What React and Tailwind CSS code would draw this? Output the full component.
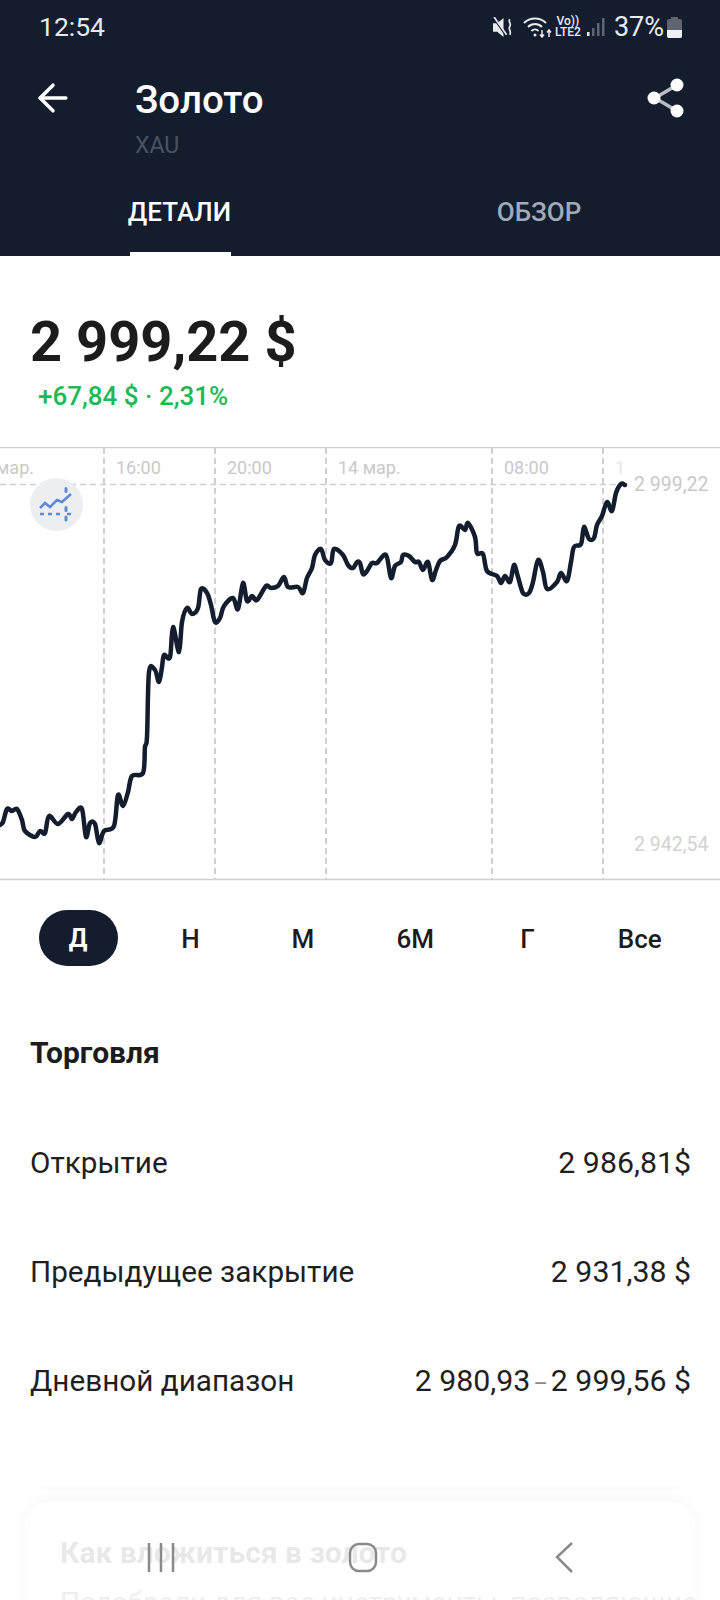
import { ArrowLeft } from 'lucide-react'

const font = "font-['Roboto','Liberation_Sans',sans-serif]"

const points = [
  [0, 825], [3, 822], [7, 809], [12, 811], [17, 809], [22, 820], [25, 831], [35, 837], [40, 831], [45, 833],
  [49, 816], [58, 824], [68, 814], [72, 819], [76, 812], [82, 809], [86, 837], [90, 823], [95, 824], [99, 843],
  [104, 831], [114, 826], [118, 795], [123, 806], [128, 792], [132, 776], [143, 773], [145, 747], [147, 737],
  [149, 672], [155, 670], [159, 682], [162, 667], [164, 655], [170, 657], [173, 627], [179, 652], [182, 622],
  [187, 608], [192, 614], [198, 608], [201, 589], [207, 593], [211, 605], [215, 622], [220, 618], [224, 606],
  [233, 598], [238, 609], [243, 583], [247, 601], [252, 596], [257, 600], [266, 586], [271, 588], [278, 586],
  [284, 577], [288, 587], [298, 587], [303, 593], [307, 578], [312, 568], [315, 555], [321, 549], [325, 560],
  [331, 563], [334, 549], [343, 555], [348, 565], [353, 568], [357, 562], [360, 563], [363, 574], [367, 571],
  [372, 563], [377, 563], [386, 555], [391, 578], [395, 566], [401, 562], [403, 555], [409, 556], [415, 562],
  [419, 562], [423, 570], [428, 562], [432, 580], [436, 570], [440, 561], [447, 557], [455, 545], [459, 526],
  [465, 530], [468, 523], [475, 537], [477, 553], [483, 554], [487, 571], [497, 576], [501, 583], [505, 576],
  [510, 582], [514, 565], [518, 577], [523, 593], [529, 593], [533, 582], [538, 560], [543, 572], [547, 589],
  [557, 582], [561, 573], [567, 581], [571, 562], [574, 547], [581, 544], [584, 527], [589, 539], [594, 538],
  [597, 525], [602, 516], [607, 502], [612, 511], [616, 493], [621, 484], [625, 485],
]

// сглаживание линии графика (Catmull-Rom -> bezier)
function smoothPath(pts) {
  let d = `M${pts[0][0]} ${pts[0][1]}`
  for (let i = 0; i < pts.length - 1; i++) {
    const p0 = pts[i - 1] || pts[i]
    const p1 = pts[i]
    const p2 = pts[i + 1]
    const p3 = pts[i + 2] || p2
    const c1x = p1[0] + (p2[0] - p0[0]) / 6
    const c1y = p1[1] + (p2[1] - p0[1]) / 6
    const c2x = p2[0] - (p3[0] - p1[0]) / 6
    const c2y = p2[1] - (p3[1] - p1[1]) / 6
    d += `C${c1x.toFixed(1)} ${c1y.toFixed(1)} ${c2x.toFixed(1)} ${c2y.toFixed(1)} ${p2[0]} ${p2[1]}`
  }
  return d
}

const gridX = [104, 215, 326, 492, 603]

const timeLabels = [
  { x: 34, text: '13 мар.', anchor: 'end' },
  { x: 116, text: '16:00' },
  { x: 227, text: '20:00' },
  { x: 338, text: '14 мар.' },
  { x: 504, text: '08:00' },
  { x: 615, text: '1', faded: true },
]

const ranges = ['Д', 'Н', 'М', '6М', 'Г', 'Все']

const rows = [
  ['Открытие', '2 986,81$'],
  ['Предыдущее закрытие', '2 931,38 $'],
  [
    'Дневной диапазон',
    <>
      2 980,93<span className="mx-[3px] text-[22px] text-[#8a8a8a]">–</span>2 999,56 $
    </>,
  ],
]

function StatusIcons() {
  return (
    <div className="flex items-center">
      <svg width="21" height="21" viewBox="0 0 20 20" className="mr-[9px]">
        <path d="M0 6h4l6-5v18l-6-5H0z" fill="#e8eaee" />
        <path d="M1 1l11 16" stroke="#141d2d" strokeWidth="2" />
        <path d="M1 0l12 17" stroke="#e8eaee" strokeWidth="1.6" />
        <path d="M16 2c-2 3 2 4 0 7s2 4 0 8" stroke="#e8eaee" strokeWidth="1.6" fill="none" />
      </svg>
      <svg width="29" height="22" viewBox="0 0 29 22" fill="none" stroke="#e8eaee" strokeWidth="2" className="mr-[3px]">
        <path d="M1 7c6-6 16-6 22 0" />
        <path d="M5 11c4-4 10-4 14 0" />
        <path d="M8.500 15c2-2 5-2 7 0" />
        <circle cx="12" cy="19" r="1.500" fill="#e8eaee" stroke="none" />
        <path d="M19 14v7M17 18.500l2 2.500 2-2.500M26 21v-7M24 16.500l2-2.500 2 2.500" strokeWidth="1.500" />
      </svg>
      <div className="flex w-[26px] flex-col items-center text-[12px] leading-[11px] font-medium text-[#e8eaee]">
        <span>Vo))</span>
        <span>LTE2</span>
      </div>
      <svg width="18" height="20" viewBox="0 0 18 20" className="ml-[6px]">
        <rect x="0" y="15" width="2.500" height="4" fill="#e8eaee" />
        <rect x="5" y="11" width="2.500" height="8" fill="#5e6570" />
        <rect x="10" y="6" width="2.500" height="13" fill="#5e6570" />
        <rect x="15" y="1" width="2.500" height="18" fill="#5e6570" />
      </svg>
      <span className="ml-[9px] text-[27px] leading-none text-[#e8eaee]">37%</span>
      <svg width="15" height="21" viewBox="0 0 15 21" className="ml-[3px]">
        <path d="M4 0h7v2h2q2 0 2 2v15q0 2-2 2H2q-2 0-2-2V4q0-2 2-2h2z" fill="#5e6570" />
        <path d="M0 13h15v6q0 2-2 2H2q-2 0-2-2z" fill="#eef0f3" />
      </svg>
    </div>
  )
}

function Chart() {
  return (
    <svg width="720" height="434" viewBox="0 447 720 434" className="block font-['Roboto']">
      <line x1="0" y1="447.500" x2="720" y2="447.500" stroke="#cfcfcf" strokeWidth="1.500" />
      <line x1="0" y1="879.500" x2="720" y2="879.500" stroke="#cfcfcf" strokeWidth="1.500" />
      <line x1="0" y1="484.500" x2="625" y2="484.500" stroke="#d0d0d0" strokeWidth="1.500" strokeDasharray="6 4" />
      {gridX.map((x) => (
        <line key={x} x1={x} y1="448" x2={x} y2="879" stroke="#d0d0d0" strokeWidth="2" strokeDasharray="6 4" />
      ))}
      {timeLabels.map((l) => (
        <text key={l.text} x={l.x} y="474" fontSize="18" fill={l.faded ? '#e6e6e6' : '#c9c9c9'} textAnchor={l.anchor || 'start'}>
          {l.text}
        </text>
      ))}
      <text x="634" y="491" fontSize="19.500" fill="#c9c9c9">2 999,22</text>
      <text x="634" y="851" fontSize="19.500" fill="#d2d2d2">2 942,54</text>

      {/* кнопка индикатора */}
      <circle cx="56.500" cy="504.500" r="26.500" fill="#eceef1" />
      <path d="M40 508l5-5 5 4 7-7 5 2 9-8" fill="none" stroke="#5b8bd6" strokeWidth="2.500" />
      <path d="M40 514h23M67 514h5" fill="none" stroke="#5b8bd6" strokeWidth="2.500" strokeDasharray="4 4" />
      <path d="M66 488.500v3M66 507.500v3M66 517v3" fill="none" stroke="#5b8bd6" strokeWidth="3" strokeLinecap="round" />

      <path
        d={smoothPath(points)}
        fill="none"
        stroke="#141d2d"
        strokeWidth="4.500"
        strokeLinejoin="round"
        strokeLinecap="round"
      />
    </svg>
  )
}

export default function App() {
  return (
    <div className={`relative h-[1600px] w-[720px] overflow-hidden bg-white ${font}`}>
      {/* Header */}
      <div className="h-[256px] bg-[#141d2d]">
        <div className="flex h-[54px] items-center justify-between pr-[38px] pl-[39px]">
          <span className="text-[26.500px] leading-none text-[#e8eaee]">12:54</span>
          <StatusIcons />
        </div>
        <div className="flex h-[108px] items-start pr-[35px] pl-[31px]">
          <ArrowLeft size={44} strokeWidth={1.9} className="mt-[22px] text-white" />
          <div className="ml-[60px] flex-1">
            <div className="mt-[22px] text-[38.500px] leading-[48px] font-medium text-white">Золото</div>
            <div className="mt-[8px] text-[23px] leading-[28px] text-[#4a5260]">XAU</div>
          </div>
          <svg width="38" height="40" viewBox="0 0 38 40" className="mt-[24px]">
            <path d="M8 20L30 7M8 20l22 13" stroke="#b9bcc2" strokeWidth="3.500" />
            <circle cx="7" cy="20" r="6.500" fill="#fff" />
            <circle cx="30" cy="7" r="6.500" fill="#fff" />
            <circle cx="30" cy="33" r="6.500" fill="#fff" />
          </svg>
        </div>
        <div className="grid h-[94px] grid-cols-2 text-[26px] font-medium">
          <div className="flex flex-col items-center justify-end text-white">
            <span className="mb-[25px] -ml-[1px] leading-[30px]">ДЕТАЛИ</span>
            <div className="h-1 w-[101px] bg-white" />
          </div>
          <div className="flex flex-col items-center justify-end pr-[2px] text-[#a3a9b5]">
            <span className="mb-[29px] leading-[30px]">ОБЗОР</span>
          </div>
        </div>
      </div>

      {/* Price */}
      <div className="h-[191px] pt-[53px] pl-[30px]">
        <div className="text-[56px] leading-[66px] font-bold text-[#1c1c1c]">2 999,22 $</div>
        <div className="mt-[6px] pl-[8px] text-[26px] leading-[30px] font-medium text-[#1db954]">+67,84 $ · 2,31%</div>
      </div>

      <Chart />

      {/* Range */}
      <div className="mt-[29px] grid grid-cols-6 pr-[24px] pl-[22px]">
        {ranges.map((r, i) => (
          <div key={r} className="flex h-[56px] items-center justify-center">
            {i === 0 ? (
              <div className="flex h-[56px] w-[79px] items-center justify-center rounded-[28px] bg-[#141d2d] pt-[2px] text-[25px] font-bold text-white">
                {r}
              </div>
            ) : (
              <span className="pt-[2px] text-[26px] font-medium text-[#1c1c1c]">{r}</span>
            )}
          </div>
        ))}
      </div>

      {/* Trading */}
      <div className="pt-[71px] pr-[29px] pl-[30px]">
        <div className="text-[30px] leading-[32px] font-bold text-[#1c1c1c]">Торговля</div>
        <div className="mt-[78px] flex flex-col gap-[77px]">
          {rows.map(([label, value]) => (
            <div key={label} className="flex items-baseline justify-between text-[29.700px] leading-[32px] text-[#1f1f1f]">
              <span>{label}</span>
              <span className="text-[30.300px]">{value}</span>
            </div>
          ))}
        </div>
      </div>

      {/* Card under nav bar */}
      <div className="mx-[25px] mt-[102px] h-[200px] rounded-[24px] bg-white px-[35px] pt-[33px] whitespace-nowrap shadow-[0_-4px_14px_rgba(0,0,0,0.25)]">
        <div className="text-[30px] leading-[36px] font-bold text-[#1c1c1c]">Как вложиться в золото</div>
        <div className="mt-[16px] text-[28px] leading-[32px] text-[#555]">Подобрали для вас инструменты, позволяющие</div>
      </div>

      {/* Nav bar */}
      <div className="absolute inset-x-0 bottom-0 h-[110px] bg-white/90">
        <svg width="720" height="110" viewBox="0 1490 720 110" className="block">
          <path d="M149 1543v29M161 1543v29M173 1543v29" stroke="#8a8a8a" strokeWidth="2.500" />
          <rect x="350" y="1544" width="26" height="27" rx="9" fill="none" stroke="#8a8a8a" strokeWidth="2.500" />
          <path d="M572 1543l-15 14 15 15" fill="none" stroke="#8a8a8a" strokeWidth="2.500" />
        </svg>
      </div>
    </div>
  )
}
